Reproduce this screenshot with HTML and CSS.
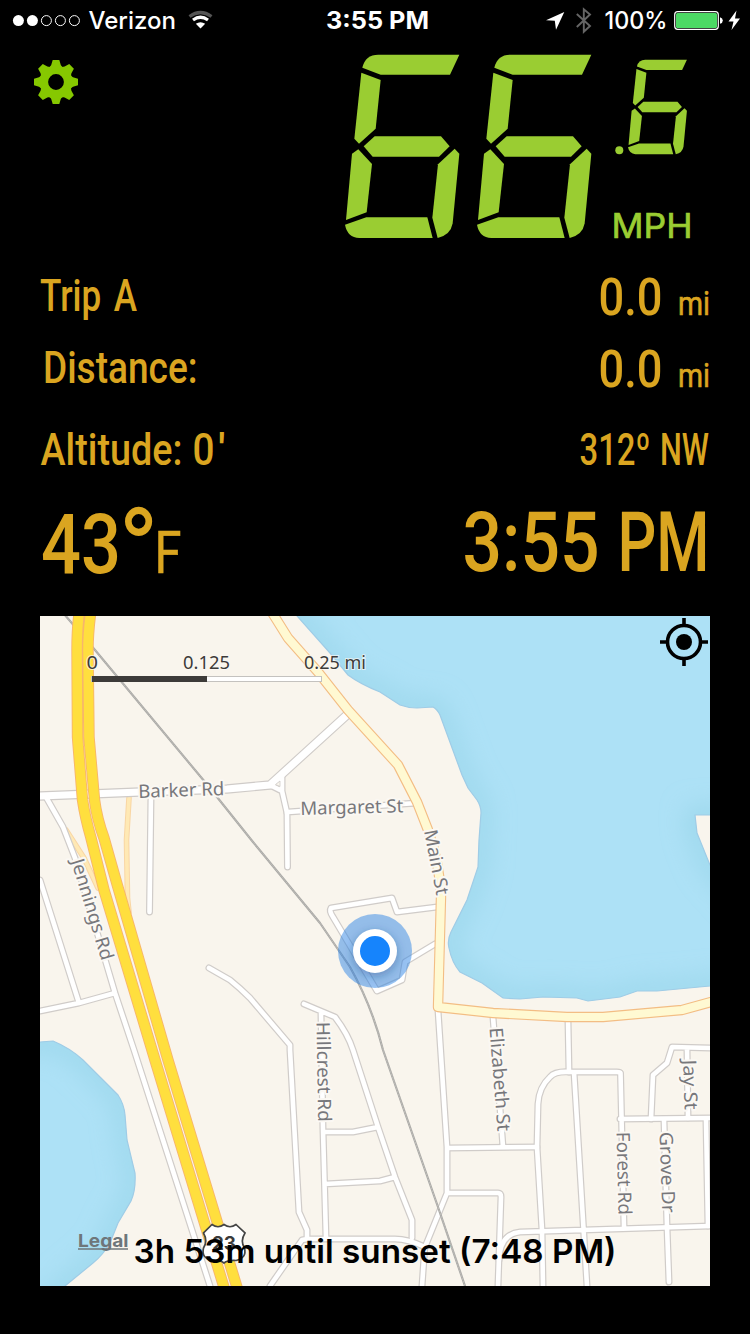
FILE: index.html
```html
<!DOCTYPE html>
<html lang="en">
<head>
<meta charset="utf-8">
<meta name="viewport" content="width=750">
<title>Speedometer</title>
<link rel="stylesheet" href="styles.css">
</head>
<body>
<header class="status">
  <svg class="status-left" width="230" height="40" viewBox="0 0 230 40">
    <g class="signal"><circle class="full" cx="18.4" cy="20.6" r="5.5"/><circle class="full" cx="32.4" cy="20.6" r="5.5"/><circle cx="46.4" cy="20.6" r="5"/><circle cx="60.4" cy="20.6" r="5"/><circle cx="74.4" cy="20.6" r="5"/></g>
    <text class="carrier" x="88.5" y="29" textLength="87.5" lengthAdjust="spacingAndGlyphs">Verizon</text>
    <path class="wifi-dim" d="M189.500 16.500Q200.500 8.500 211.500 16.500"/>
    <path class="wifi" d="M193 20Q200.500 14.500 208 20"/>
    <path class="wifi-dot" d="M195.800 23.800Q200.500 20.500 205.200 23.800L200.500 28.500Z"/>
  </svg>
  <svg class="status-time" width="110" height="40" viewBox="0 0 110 40"><text class="clock" x="2" y="29" textLength="103" lengthAdjust="spacingAndGlyphs">3:55 PM</text></svg>
  <svg class="status-right" width="220" height="40" viewBox="530 0 220 40">
    <path fill="#fff" d="M564.300 12L546 20.200L554.800 20.800L556 29.800Z"/>
    <path class="bluetooth" d="M576.800 14L590 26L583.800 31.800V9.300L590 14.500L576.800 27"/>
    <text class="carrier" x="604.500" y="29" textLength="63" lengthAdjust="spacingAndGlyphs">100%</text>
    <rect class="battery" x="674.700" y="11.700" width="43.600" height="17.600" rx="3"/>
    <rect fill="#4cd964" x="676" y="13" width="41" height="15" rx="1.500"/>
    <path fill="#fff" d="M720 17.300Q722.800 18 722.800 20.500Q722.800 23 720 23.700Z"/>
    <path fill="#fff" d="M736.500 10.500L728.500 21.500H733.500L731.500 30L740 18.500H735Z"/>
  </svg>
</header>

<section class="speed">
  <svg class="gear" width="44" height="44" viewBox="-22 -22 44 44">
    <defs><path id="tooth" d="M-7.500 -13L-4.800 -17L-3.300 -22H3.300L4.800 -17L7.500 -13Z"/></defs>
    <use href="#tooth"/><use href="#tooth" transform="rotate(45)"/><use href="#tooth" transform="rotate(90)"/><use href="#tooth" transform="rotate(135)"/><use href="#tooth" transform="rotate(180)"/><use href="#tooth" transform="rotate(225)"/><use href="#tooth" transform="rotate(270)"/><use href="#tooth" transform="rotate(315)"/>
    <circle class="gear-ring" r="12.200"/>
  </svg>
  <svg class="digits" width="410" height="210" viewBox="340 40 410 210">
    <defs>
      <g id="six">
        <path d="M97 83Q106 44 145 44H388L360 104H152Z"/>
        <path d="M94 98L152 120L137 266L87 311L73 296Z"/>
        <path d="M101 319L134 289H333L359 319L327 350H128Z"/>
        <path d="M85 328L126 372L110 517L48 540L66 341Z"/>
        <path d="M374 326L388 341L368 550Q362 585 323 594L307 533L324 373Z"/>
        <path d="M45 554L109 532H292L308 594H88Q52 592 45 554Z"/>
      </g>
    </defs>
    <use href="#six" transform="translate(330 40) scale(.33333)"/>
    <use href="#six" transform="translate(462 40) scale(.33333)"/>
    <use href="#six" transform="translate(620.300 52.200) scale(.1717)"/>
    <circle cx="619.300" cy="150.300" r="4"/>
    <text class="unit" x="611.500" y="238" textLength="81" lengthAdjust="spacingAndGlyphs">MPH</text>
  </svg>
</section>

<main class="panel">
  <div class="row">
    <svg width="250" height="72" viewBox="40 260 250 72"><text class="t45" x="40" y="311" textLength="97" lengthAdjust="spacingAndGlyphs">Trip A</text></svg>
    <svg width="300" height="72" viewBox="410 260 300 72"><text class="t52" x="598.500" y="315" textLength="64" lengthAdjust="spacingAndGlyphs">0.0</text><text class="t33" x="678" y="315" textLength="32" lengthAdjust="spacingAndGlyphs">mi</text></svg>
  </div>
  <div class="row">
    <svg width="250" height="72" viewBox="40 260 250 72"><text class="t45" x="43" y="311" textLength="154.500" lengthAdjust="spacingAndGlyphs">Distance:</text></svg>
    <svg width="300" height="72" viewBox="410 260 300 72"><text class="t52" x="598.500" y="315" textLength="64" lengthAdjust="spacingAndGlyphs">0.0</text><text class="t33" x="678" y="315" textLength="32" lengthAdjust="spacingAndGlyphs">mi</text></svg>
  </div>
  <div class="row">
    <svg width="250" height="82" viewBox="40 404 250 82"><text class="t45" x="40.500" y="465" textLength="142" lengthAdjust="spacingAndGlyphs">Altitude:</text><text class="t45" x="192.500" y="465" textLength="22" lengthAdjust="spacingAndGlyphs">0</text><text class="t45" x="218" y="465">'</text></svg>
    <svg width="300" height="82" viewBox="410 404 300 82"><text class="t45" x="579.500" y="465" textLength="71" lengthAdjust="spacingAndGlyphs">312º</text><text class="t45" x="660" y="465" textLength="49" lengthAdjust="spacingAndGlyphs">NW</text></svg>
  </div>
  <div class="row">
    <svg width="250" height="130" viewBox="40 486 250 130"><text class="t84" x="41" y="573" textLength="80" lengthAdjust="spacingAndGlyphs">43</text><text class="degree" x="118" y="591" textLength="41" lengthAdjust="spacingAndGlyphs">°</text><text class="t60" x="154.500" y="573" textLength="27" lengthAdjust="spacingAndGlyphs">F</text></svg>
    <svg width="300" height="130" viewBox="410 486 300 130"><text class="t84" x="462.500" y="571" textLength="137" lengthAdjust="spacingAndGlyphs">3:55</text><text class="t84" x="617.500" y="571" textLength="92" lengthAdjust="spacingAndGlyphs">PM</text></svg>
  </div>

  <div class="map">
    <svg width="670" height="670" viewBox="40 616 670 670">
      <defs>
        <path id="lake" d="M280 580L297 616L330 653L348 675Q360 684 380 692L400 705Q408 708 417 708L433 707Q437 709 440 715L462 775L468 788L477 800Q481 806 481 813L479 840L478 867L467 900L451 932Q447 940 449 948Q452 963 460 972L482 983L503 998L520 999L543 997L577 998L588 1001L620 997L637 991L657 991L710 986L760 980V920L710 865L697 833L695 815H760V580Z"/>
        <path id="pond" d="M0 1042H40L53 1041Q70 1048 83 1060L118 1095Q124 1104 125 1115L127 1140L135 1173Q136 1190 131 1201L118 1223L110 1243Q103 1255 93 1263L65 1286L30 1320H0Z"/>
        <clipPath id="water"><use href="#lake"/><use href="#pond"/></clipPath>
        <filter id="soft" x="-20%" y="-20%" width="140%" height="140%"><feGaussianBlur stdDeviation="13"/></filter>
        <filter id="shade" x="-50%" y="-50%" width="200%" height="200%"><feGaussianBlur stdDeviation="4"/></filter>
        <g id="streets">
          <path d="M40 880L79 1003M40 1011L79 1003L115 993M46 797L63 827L75 858L115 993L134 1050L210 1286M151 794L149.500 912M287 813L287.500 867M288 812L417 803"/>
          <path d="M209 968L230 980Q240 988 250 998L290 1045V1050L299 1212L307 1230V1239M270 1286L302 1240L307 1239H395Q408 1239 425 1247"/>
          <path d="M304 1004L335 1017Q348 1034 353 1050L378 1127L395 1177L412 1220V1238M321 1013L323 1130L326 1238M323 1132H353L378 1127M325 1184L380 1181L395 1177"/>
          <path d="M438 1010L447 1147V1193L427 1242Q424 1248 424 1258L422 1286M447 1193L498 1193Q501 1193 501 1197L498 1286M447 1148L537 1147M493 1017L503 1147M568 1020L569 1072"/>
          <path d="M624 1227L620.500 1073Q620 1072 617 1072L570 1072Q555 1071 550 1077Q539 1087 538 1104L537 1147L542 1230L543 1286M574 1072L587 1286M620 1119L710 1118M499 1260Q500 1234 520 1232L583 1230L710 1226"/>
          <path d="M651 1119L653 1075L667 1063L672 1047L710 1048M687 1048L688 1118M664 1120L667 1227L669 1282M706 1120L708 1226"/>
          <path d="M437 907L397 912L392 898L331 908Q329 911 333 917L377 991L402 980L405 962L435 944"/>
        </g>
        <path id="barker" d="M40 796L140 792L227 789L270 785L348 714"/>
        <path id="fork" d="M270 785L282 791V774M282 791L287 813"/>
        <path id="main" d="M273 614L288 638L318 672L348 710L378 743L398 765L417 802L428 830Q440 865 441 897L438 1007L493 1013L567 1017H603L682 1010L711 1002"/>
        <path id="highway" d="M79 614Q77 630 77 650L77.500 737L82.500 800Q85 817 91 838L104 890L155 1060L224.500 1289M90.500 614Q88 634 88 650L89 737L94.500 800Q97 819 104 838L117 884L168 1060L237.500 1289"/>
        <g id="ramps"><path d="M129 798L126.500 840L127.500 898L129 912M66 830L84 858L98 888"/></g>
      </defs>
      <rect class="land" x="40" y="616" width="670" height="670"/>
      <g class="water"><use href="#lake"/><use href="#pond"/></g>
      <g clip-path="url(#water)"><g class="water-edge" filter="url(#soft)"><use href="#lake"/><use href="#pond"/></g></g>
      <g class="shore"><use href="#lake"/><use href="#pond"/></g>
      <use href="#ramps" class="ramp-case"/><use href="#ramps" class="ramp"/>
      <use href="#streets" class="street-case"/><use href="#fork" class="street-case"/><use href="#barker" class="barker-case"/>
      <use href="#streets" class="street"/><use href="#fork" class="street"/><use href="#barker" class="barker"/>
      <path class="fork-island" d="M275.500 784.500L280 781V786.500Z"/>
      <path class="rail" d="M64 614L95 650L205 782L253 842L320 923L350 967Q372 1006 383 1050L438 1207L465 1286"/>
      <path class="rail-core" d="M64 614L95 650L205 782L253 842L320 923L350 967Q372 1006 383 1050L438 1207L465 1286"/>
      <use href="#main" class="main-case"/><use href="#main" class="main"/>
      <use href="#highway" class="hwy-case"/><use href="#highway" class="hwy"/>
      <g class="label">
        <text transform="translate(138.500 798) rotate(-2)" textLength="86" lengthAdjust="spacingAndGlyphs">Barker Rd</text>
        <text transform="translate(300.500 815) rotate(-1.500)" textLength="103" lengthAdjust="spacingAndGlyphs">Margaret St</text>
        <text transform="translate(424 831) rotate(79)" textLength="66" lengthAdjust="spacingAndGlyphs">Main St</text>
        <text transform="translate(71 861) rotate(73)" textLength="105" lengthAdjust="spacingAndGlyphs">Jennings Rd</text>
        <text transform="translate(316.500 1022) rotate(89)" textLength="100" lengthAdjust="spacingAndGlyphs">Hillcrest Rd</text>
        <text transform="translate(489.500 1028) rotate(85.500)" textLength="104" lengthAdjust="spacingAndGlyphs">Elizabeth St</text>
        <text transform="translate(683 1060) rotate(88)" textLength="50" lengthAdjust="spacingAndGlyphs">Jay St</text>
        <text transform="translate(616.500 1132) rotate(88.500)" textLength="83" lengthAdjust="spacingAndGlyphs">Forest Rd</text>
        <text transform="translate(659.500 1132) rotate(88)" textLength="81" lengthAdjust="spacingAndGlyphs">Grove Dr</text>
      </g>
      <g class="shield"><path d="M212 1224.500Q218 1229 224 1224.500Q230 1229 236 1224.500L245 1233Q240 1241 244.500 1248Q247 1258 236 1260.500Q228 1260 224 1263Q220 1260 212 1260.500Q201 1258 203.500 1248Q208 1241 203.500 1233Z"/><text x="212" y="1249.500" textLength="24" lengthAdjust="spacingAndGlyphs">23</text></g>
      <rect class="scale-bg" x="91.500" y="676.500" width="230" height="5"/><rect class="scale-fill" x="92" y="676" width="115" height="6"/>
      <g class="scale-text"><text x="86.500" y="669" textLength="11.500" lengthAdjust="spacingAndGlyphs">0</text><text x="183" y="669" textLength="47" lengthAdjust="spacingAndGlyphs">0.125</text><text x="304" y="669" textLength="62" lengthAdjust="spacingAndGlyphs">0.25 mi</text></g>
      <circle class="halo" cx="375" cy="951" r="37"/><circle class="dot-shadow" cx="375" cy="954" r="23" filter="url(#shade)"/><circle fill="#fff" cx="375" cy="951" r="22"/><circle fill="#1684fc" cx="375" cy="951" r="15"/>
      <g class="locate"><circle cx="684" cy="642" r="16.500"/><path d="M684 618V626M684 658V666M660 642H668M700 642H708"/><circle class="locate-dot" cx="684" cy="642" r="8"/></g>
      <text class="legal" x="78" y="1247" textLength="50.500" lengthAdjust="spacingAndGlyphs">Legal</text><path class="legal-line" d="M78 1249H128"/>
      <text class="sunset" x="133.500" y="1263" textLength="483" lengthAdjust="spacingAndGlyphs">3h 53m until sunset (7:48 PM)</text>
    </svg>
  </div>
</main>
</body>
</html>
```

FILE: styles.css
```css
body { margin: 0; width: 750px; height: 1334px; background: #000; overflow: hidden; }
svg { display: block; }

.status { display: flex; height: 40px; }
.status-time { margin-left: 94px; }
.status-right { margin-left: auto; }
.signal circle { fill: none; stroke: #fff; stroke-width: 1; }
.signal .full { fill: #fff; stroke: none; }
.carrier { font: 500 24px Inter, sans-serif; fill: #fff; }
.clock { font: 650 24px Inter, sans-serif; fill: #fff; }
.wifi, .wifi-dim { fill: none; stroke: #fff; stroke-width: 3.2; }
.wifi-dim { stroke: #555; }
.wifi-dot { fill: #fff; }
.bluetooth { fill: none; stroke: #666; stroke-width: 1.9; }
.battery { fill: none; stroke: #fff; stroke-width: 1.2; }

.speed { display: flex; justify-content: space-between; height: 210px; margin-bottom: 10px; }
.gear { margin: 20px 0 0 34px; fill: #86c800; }
.gear-ring { fill: none; stroke: #86c800; stroke-width: 8.6; }
.digits { fill: #9acd32; }
.unit { font: 400 34.5px Inter, sans-serif; stroke: #9acd32; stroke-width: .7; }

.panel { display: flex; flex-direction: column; padding: 0 40px; }
.row { display: flex; justify-content: space-between; font-family: Roboto, sans-serif; font-weight: 500; fill: #daa520; }
.row svg { overflow: visible; }
.t33 { font-size: 33px; font-weight: 400; stroke: #daa520; stroke-width: .6; }
.t45 { font-size: 45px; word-spacing: 5px; }
.t52 { font-size: 51px; }
.t60 { font-size: 60px; font-weight: 400; stroke: #daa520; stroke-width: .6; }
.t84 { font-size: 83.5px; }
.degree { font-size: 116px; font-weight: 400; }

.map { height: 670px; overflow: hidden; }
.land { fill: #f9f5ed; }
.water { fill: #ade1f6; }
.water-edge { fill: none; stroke: #97d4e8; stroke-width: 14; }
.shore { fill: none; stroke: #9fcce6; stroke-width: 1.2; }
.street, .street-case, .barker, .barker-case, .main, .main-case, .ramp, .ramp-case, .hwy, .hwy-case, .rail, .rail-core { fill: none; stroke-linecap: round; stroke-linejoin: round; }
.street-case { stroke: #d0ccc9; stroke-width: 7; }
.street { stroke: #fff; stroke-width: 4.6; }
.barker-case { stroke: #cfcbc8; stroke-width: 9.4; }
.barker { stroke: #fff; stroke-width: 7.2; }
.fork-island { fill: #f9f5ed; stroke: #cfcbc8; stroke-width: .8; }
.ramp-case { stroke: #f9d6a4; stroke-width: 5.6; }
.ramp { stroke: #ffe9b5; stroke-width: 3.6; }
.main-case { stroke: #f3bd84; stroke-width: 10.4; }
.main { stroke: #fff9d2; stroke-width: 8.2; }
.hwy-case { stroke: #f7b56c; stroke-width: 11.4; }
.hwy { stroke: #ffdf3e; stroke-width: 9.6; }
.rail { stroke: #aaa9a6; stroke-width: 2.2; }
.rail-core { stroke: #c9c7c3; stroke-width: .7; stroke-dasharray: 1.5 1.5; }
.label text { font: 450 18.5px "Noto Sans", sans-serif; fill: #77777b; stroke: #fbf8f3; stroke-width: 4px; stroke-linejoin: round; paint-order: stroke; }
.shield path { fill: #fff; stroke: #444; stroke-width: 1.7; }
.shield text { font: 700 19px Inter, sans-serif; fill: #3a3a3a; }
.scale-bg { fill: #fff; stroke: #c4c2bf; stroke-width: 1; }
.scale-fill { fill: #3d3b39; }
.scale-text text { font: 400 18px "Noto Sans", sans-serif; fill: #3d3b39; stroke: #fbf8f3; stroke-opacity: .7; stroke-width: 2px; paint-order: stroke; }
.halo { fill: #2f86e5; fill-opacity: .5; }
.dot-shadow { fill: #16447d; fill-opacity: .35; }
.locate circle, .locate path { fill: none; stroke: #000; stroke-width: 3.6; }
.locate .locate-dot { fill: #000; stroke: none; }
.legal { font: 700 18px Inter, sans-serif; fill: #6e767a; }
.legal-line { stroke: #6e767a; stroke-width: 1.5; }
.sunset { font: 600 33px Inter, sans-serif; fill: #000; }
```
